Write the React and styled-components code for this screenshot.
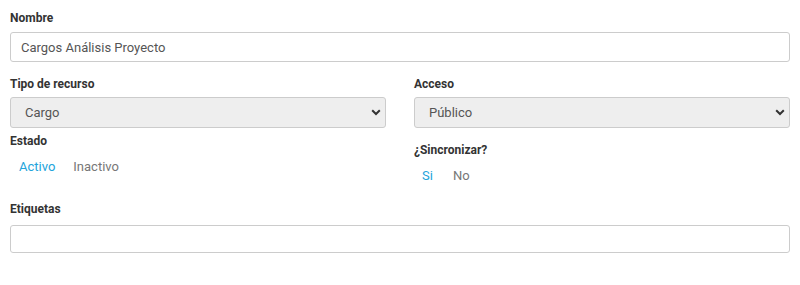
import React, { useState } from "react";
import styled, { createGlobalStyle } from "styled-components";

const GlobalStyle = createGlobalStyle`
  body {
    margin: 0;
    background: #fff;
    font-family: Roboto, "Liberation Sans", Arial, sans-serif;
  }
  * { box-sizing: border-box; }
`;

const Form = styled.form`
  width: 800px;
  padding: 10px 10px 0;
`;

const Group = styled.div`
  margin-bottom: ${(p) => p.$mb || 0}px;
  margin-top: ${(p) => p.$mt || 0}px;
`;

const Label = styled.label`
  display: block;
  font-size: 12px;
  font-weight: 700;
  line-height: 17px;
  color: #333;
  margin-bottom: ${(p) => p.$mb || 5}px;
`;

const TextInput = styled.input`
  display: block;
  width: 100%;
  height: ${(p) => p.$h || 30}px;
  padding: 0 10px;
  border: 1px solid #ccc;
  border-radius: 3px;
  font-family: inherit;
  font-size: 13px;
  color: #555;
  background: #fff;
  outline: none;
`;

const Row = styled.div`
  display: grid;
  grid-template-columns: 1fr 1fr;
  column-gap: 28px;
`;

const SelectWrap = styled.div`
  position: relative;
`;

const Select = styled.select`
  display: block;
  width: 100%;
  height: 31px;
  padding: 0 14px;
  border: 1px solid #ccc;
  border-radius: 3px;
  background: #eee;
  font-family: inherit;
  font-size: 13px;
  color: #555;
  appearance: none;
  outline: none;
`;

const Chevron = styled.svg`
  position: absolute;
  right: 5px;
  top: 12px;
  pointer-events: none;
`;

const Toggle = styled.div`
  display: flex;
  height: 22px;
  align-items: center;
  gap: ${(p) => p.$gap || 0}px;
  margin-left: ${(p) => p.$ml || 0}px;
`;

const Option = styled.span`
  font-size: 13px;
  padding: 0 9px;
  color: ${(p) => (p.$active ? "#23a4db" : "#777")};
  cursor: pointer;
`;

const SelectField = ({ value }) => (
  <SelectWrap>
    <Select defaultValue={value}>
      <option>{value}</option>
    </Select>
    <Chevron width="10" height="7" viewBox="0 0 10 7">
      <path d="M1.2 1.3 L5 5 L8.8 1.3" fill="none" stroke="#333" strokeWidth="2" />
    </Chevron>
  </SelectWrap>
);

const App = () => {
  const [estado, setEstado] = useState("Activo");
  const [sync, setSync] = useState("Si");
  return (
    <>
      <GlobalStyle />
      <Form>
        <Group $mb={14}>
          <Label>Nombre</Label>
          <TextInput defaultValue="Cargos Análisis Proyecto" />
        </Group>
        <Row>
          <div>
            <Label $mb={4}>Tipo de recurso</Label>
            <SelectField value="Cargo" />
            <Group $mt={5}>
              <Label>Estado</Label>
              <Toggle>
                {["Activo", "Inactivo"].map((o) => (
                  <Option key={o} $active={estado === o} onClick={() => setEstado(o)}>
                    {o}
                  </Option>
                ))}
              </Toggle>
            </Group>
          </div>
          <div>
            <Label $mb={4}>Acceso</Label>
            <SelectField value="Público" />
            <Group $mt={14}>
              <Label>¿Sincronizar?</Label>
              <Toggle $ml={-1} $gap={2}>
                {["Si", "No"].map((o) => (
                  <Option key={o} $active={sync === o} onClick={() => setSync(o)}>
                    {o}
                  </Option>
                ))}
              </Toggle>
            </Group>
          </div>
        </Row>
        <Group $mt={15}>
          <Label $mb={7}>Etiquetas</Label>
          <TextInput $h={28} />
        </Group>
      </Form>
    </>
  );
};

export default App;
